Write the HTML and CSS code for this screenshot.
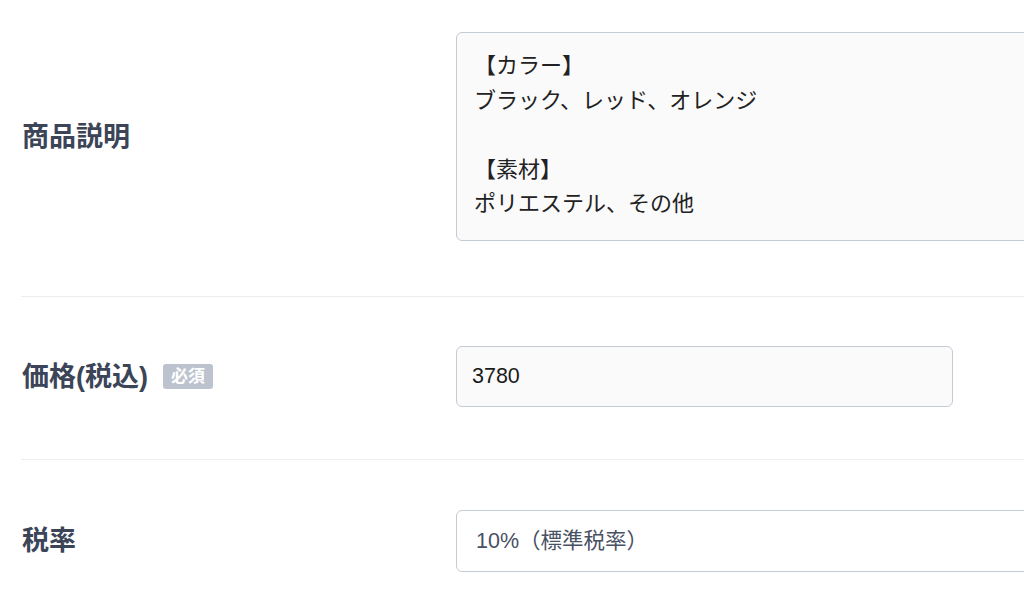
FILE: index.html
```html
<!DOCTYPE html>
<html lang="ja">
<head>
<meta charset="utf-8">
<title>商品編集</title>
<link rel="stylesheet" href="styles.css">
</head>
<body>
<div class="form">
  <div class="row row-first">
    <div class="label">商品説明</div>
    <div class="field">
      <textarea class="control textarea" rows="5">【カラー】
ブラック、レッド、オレンジ

【素材】
ポリエステル、その他</textarea>
    </div>
  </div>
  <div class="row">
    <div class="label">価格(税込)<span class="badge">必須</span></div>
    <div class="field">
      <input class="control input" type="text" value="3780">
    </div>
  </div>
  <div class="row row-last">
    <div class="label">税率</div>
    <div class="field">
      <select class="control select">
        <option>10%（標準税率）</option>
      </select>
    </div>
  </div>
</div>
</body>
</html>
```

FILE: styles.css
```css
html, body {
  margin: 0;
  padding: 0;
  background: #ffffff;
  overflow: hidden;
}

body {
  font-family: "Liberation Sans", "Noto Sans CJK JP", sans-serif;
  width: 1024px;
  height: 596px;
}

.form {
  padding-left: 21px;
  width: 1200px;
}

.row {
  display: flex;
  align-items: center;
  padding: 49px 0 52px;
  border-bottom: 1px solid #ededf1;
}

.row-first {
  padding: 32px 0 55px;
}

.row-last {
  padding-top: 50px;
  border-bottom: none;
}

.label {
  width: 435px;
  flex: none;
  display: flex;
  align-items: center;
  font-family: "Liberation Sans", "Noto Sans CJK JP", sans-serif;
  font-weight: 700;
  font-size: 27px;
  line-height: 34px;
  color: #3b4557;
  box-sizing: border-box;
  padding-left: 1px;
}

.badge {
  display: inline-block;
  margin-left: 15px;
  background: #bcc3cf;
  color: #ffffff;
  font-size: 17px;
  font-weight: 700;
  line-height: 25px;
  padding: 0 8px;
  border-radius: 3px;
}

.field {
  flex: 1;
}

.control {
  display: block;
  box-sizing: border-box;
  margin: 0;
  font-family: "Liberation Sans", "Noto Sans CJK JP", sans-serif;
  border: 1px solid #c4cad6;
  border-radius: 6px;
  outline: none;
}

.textarea {
  width: 700px;
  height: 209px;
  padding: 16px 17px;
  background: #fafafb;
  color: #222222;
  font-size: 22px;
  line-height: 34.6px;
  resize: none;
  overflow: hidden;
}

.input {
  width: 497px;
  height: 61px;
  padding: 0 15px;
  background: #fafafb;
  color: #1a1a1a;
  font-size: 21.5px;
}

.select {
  -webkit-appearance: none;
  appearance: none;
  width: 700px;
  height: 62px;
  padding: 0 19px;
  background: #ffffff;
  color: #485063;
  font-size: 21.5px;
}
```
